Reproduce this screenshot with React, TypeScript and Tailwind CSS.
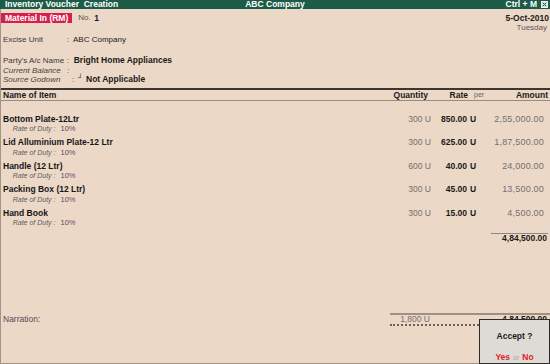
import React from "react";

const items = [
  { name: "Bottom Plate-12Ltr", qty: "300 U", rate: "850.00", amt: "2,55,000.00" },
  { name: "Lid Alluminium Plate-12 Ltr", qty: "300 U", rate: "625.00", amt: "1,87,500.00" },
  { name: "Handle (12 Ltr)", qty: "600 U", rate: "40.00", amt: "24,000.00" },
  { name: "Packing Box (12 Ltr)", qty: "300 U", rate: "45.00", amt: "13,500.00" },
  { name: "Hand Book", qty: "300 U", rate: "15.00", amt: "4,500.00" },
];

export default function App() {
  return (
    <div className="relative w-[550px] h-[364px] overflow-hidden bg-[#ecd8c6] flex flex-col font-['Liberation_Sans',Arial,sans-serif] text-[8px] text-[#3a3a3a]">
      {/* Title bar */}
      <div className="h-[9px] shrink-0 bg-[#1b5b47] grid grid-cols-[1fr_auto_1fr] items-center text-white font-bold text-[8.5px] leading-none">
        <div className="pl-[5px] whitespace-pre">Inventory Voucher  Creation</div>
        <div>ABC Company</div>
        <div className="flex justify-end items-center pr-[2px]">
          <span>Ctrl + M</span>
          <svg className="ml-[4px]" width="7" height="7" viewBox="0 0 7 7">
            <rect x="0.5" y="0.5" width="6" height="6" fill="#d9dedb" stroke="#f2f2f2" strokeWidth="1" />
            <path d="M1.8 1.8 L5.2 5.2 M5.2 1.8 L1.8 5.2" stroke="#1b5b47" strokeWidth="1" />
          </svg>
        </div>
      </div>

      {/* Body */}
      <div className="flex-1 flex flex-col border-l border-b border-[#a39585]">
        {/* Row 1 */}
        <div className="h-[24px] shrink-0 flex justify-between pt-[4px]">
          <div className="flex items-center h-[10px]">
            <span className="h-[10px] leading-[10px] bg-[#d61f4e] text-white font-bold text-[8.5px] px-[4px]">Material In (RM)</span>
            <span className="ml-[6px] text-[#555]">No.</span>
            <span className="ml-[3.5px] font-bold text-[8.5px] text-[#1a1a1a]">1</span>
          </div>
          <div className="flex flex-col items-end">
            <div className="leading-[10px] font-bold text-[8.5px] text-[#1a1a1a] pr-[1px]">5-Oct-2010</div>
            <div className="leading-[10px] text-[#6a5262] pr-[3px]">Tuesday</div>
          </div>
        </div>

        {/* Excise unit */}
        <div className="mt-[2px] leading-[9px] flex pl-[2px]">
          <span className="w-[63.7px]">Excise Unit</span>
          <span className="w-[6.3px]">:</span>
          <span className="text-[#222]">ABC Company</span>
        </div>

        {/* Party */}
        <div className="mt-[12px] leading-[9.5px] flex pl-[2px]">
          <span className="w-[63.7px]">Party's A/c Name</span>
          <span className="w-[7px]">:</span>
          <span className="font-bold text-[8.5px] text-[#1a1a1a]">Bright Home Appliances</span>
        </div>
        <div className="leading-[9.5px] flex pl-[2px] italic text-[#444]">
          <span className="w-[64px]">Current Balance</span>
          <span>:</span>
        </div>
        <div className="leading-[9.5px] flex pl-[2px]">
          <span className="w-[69px] italic text-[#444]">Source Godown</span>
          <span className="w-[6px]">:</span>
          <span className="w-[8px] text-[7px] font-bold leading-[6px] self-start text-[#1a1a1a]">┘</span>
          <span className="font-bold text-[8.5px] text-[#1a1a1a]">Not Applicable</span>
        </div>

        {/* Header line */}
        <div className="mt-[3.5px] h-[2px] shrink-0 bg-[#3d3530]" />
        <div className="h-[10px] leading-[10px] flex font-bold text-[8.5px] text-[#1a1a1a] pl-[2px] pr-[2px]">
          <div className="flex-1">Name of Item</div>
          <div className="w-[60px] text-right">Quantity</div>
          <div className="w-[40px] text-right">Rate</div>
          <div className="ml-[6px] w-[12px] font-normal text-[7px] text-[#666]">per</div>
          <div className="w-[62px] text-right">Amount</div>
        </div>
        <div className="h-[1px] shrink-0 bg-[#9c8a7a]" />

        {/* Items */}
        <div className="mt-[13.6px] flex flex-col">
          {items.map((it) => (
            <div key={it.name} className="h-[23.6px] flex flex-col">
              <div className="h-[9.4px] leading-[9.4px] flex pl-[2px] pr-[6px]">
                <div className="flex-1 font-bold text-[8.5px] text-[#161616]">{it.name}</div>
                <div className="w-[60px] text-right text-[8.5px] text-[#707070]">{it.qty}</div>
                <div className="w-[36px] text-right font-bold text-[8.5px] text-[#1a1a1a]">{it.rate}</div>
                <div className="ml-[3px] w-[9px] font-bold text-[8.5px] text-[#1a1a1a]">U</div>
                <div className="w-[65px] text-right text-[9px] tracking-[0.2px] text-[#707070]">{it.amt}</div>
              </div>
              <div className="h-[9.4px] leading-[9.4px] flex pl-[11.7px]">
                <span className="italic text-[7px] text-[#5c5c5c]">Rate of Duty :</span>
                <span className="ml-[5px] text-[7.5px] text-[#6a3f6f]">10%</span>
              </div>
            </div>
          ))}
        </div>

        {/* Total */}
        <div className="flex flex-col items-end pr-[2px]">
          <div className="w-[57px] h-[1.5px] bg-[#8c8884]" />
          <div className="leading-[9px] font-bold text-[8.5px] text-[#1a1a1a] pr-[1px]">4,84,500.00</div>
        </div>

        <div className="flex-1" />

        {/* Bottom */}
        <div className="h-[50px] shrink-0 flex">
          <div className="pl-[2px] pt-[2px] leading-[9px] text-[8.5px] text-[#5a4858]">Narration:</div>
          <div className="ml-auto w-[160px] flex flex-col">
            <div className="h-[2px] bg-[#a08f82]" />
            <div className="flex h-[9px]">
              <div className="w-[40px] text-right leading-[9px] text-[8.5px] text-[#707070]">1,800 U</div>
              <div className="flex-1 text-right leading-[9px] font-bold text-[8.5px] text-[#1a1a1a] pr-[3px]">4,84,500.00</div>
            </div>
            <div className="h-[2px] border-t-2 border-dotted border-[#6e5e54]" />
          </div>
        </div>
      </div>

      {/* Accept dialog */}
      <div className="absolute right-0 bottom-0 w-[71px] h-[45px] border border-[#2a2a2a] bg-[#dedad6] flex flex-col items-center pt-[12px]">
        <div className="leading-[9px] font-bold text-[8.5px] text-[#1a1a1a]">Accept ?</div>
        <div className="mt-[12px] leading-[9px] flex items-baseline text-[8.5px]">
          <span className="font-bold text-[#e41b23]">Yes</span>
          <span className="mx-[3px] text-[7px] text-[#a8a8a8]">or</span>
          <span className="font-bold text-[#e41b23]">No</span>
        </div>
      </div>
    </div>
  );
}
